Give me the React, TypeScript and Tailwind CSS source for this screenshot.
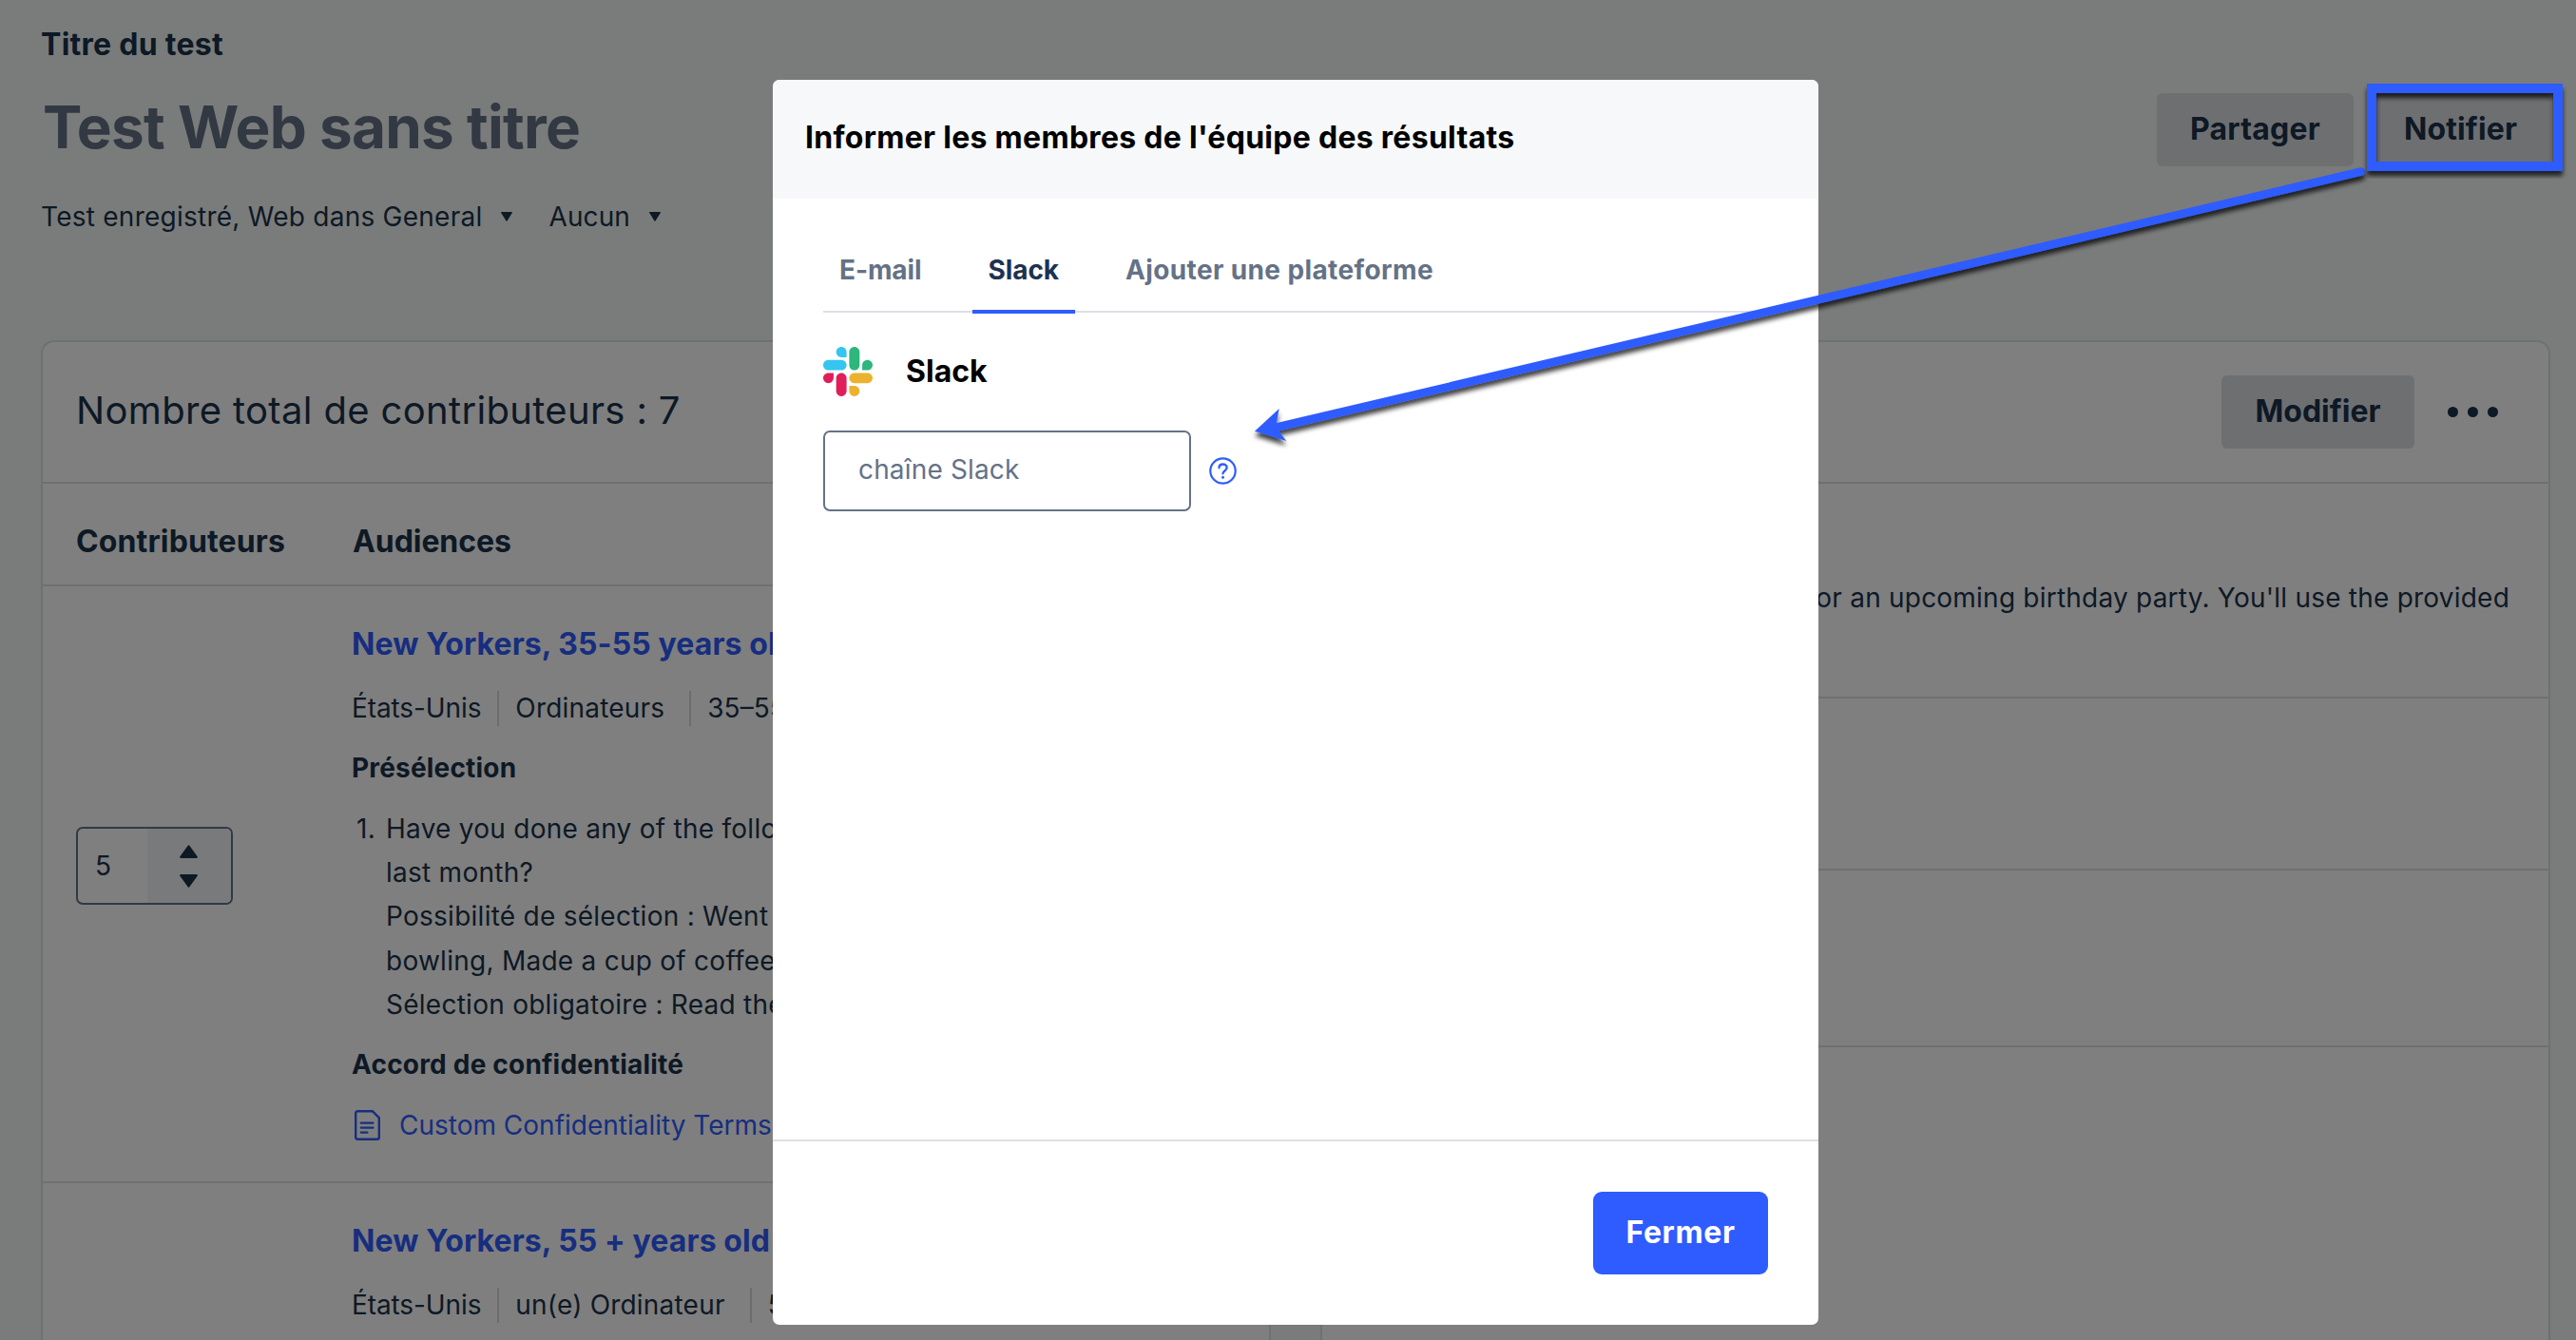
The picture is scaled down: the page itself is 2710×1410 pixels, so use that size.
import React from "react";

const tabs = [
  { label: "E-mail", active: false, tracking: "tracking-[-0.1px]" },
  { label: "Slack", active: true, tracking: "tracking-[-0.1px]" },
  { label: "Ajouter une plateforme", active: false, tracking: "tracking-[0.38px]" },
];

const screener = [
  "Have you done any of the following in the",
  "last month?",
  "Possibilité de sélection : Went to a movie, Went",
  "bowling, Made a cup of coffee at home",
  "Sélection obligatoire : Read the news",
];

function Caret() {
  return (
    <svg width="12" height="10" viewBox="0 0 12 10" fill="currentColor">
      <path d="M0.6 0h10.8q0.9 0 0.4 0.9L6.5 9.4q-0.5 0.7-1 0L0.2 0.9Q-0.3 0 0.6 0z" />
    </svg>
  );
}

function StepArrow({ down = false }: { down?: boolean }) {
  return (
    <svg
      width="19"
      height="14"
      viewBox="0 0 19 14"
      fill="currentColor"
      className={down ? "rotate-180" : ""}
    >
      <path d="M8.7 0.7q0.8-1 1.6 0l8.2 11.2q1 1.9-1 2.1h-16q-2-0.2-1-2.1z" />
    </svg>
  );
}

function DocumentIcon() {
  return (
    <svg width="27" height="32" viewBox="0 0 27 32" fill="none" stroke="currentColor" strokeWidth="2.4">
      <path d="M3.2 1.2h15.6l7 7v20.6a2 2 0 0 1-2 2H3.2a2 2 0 0 1-2-2V3.2a2 2 0 0 1 2-2z" strokeLinejoin="round" />
      <path d="M6.8 13.6h12.6M6.8 18.6h12.6M6.8 23.6h6.6" strokeLinecap="round" />
    </svg>
  );
}

function SlackLogo() {
  return (
    <svg width="52" height="52" viewBox="0 0 122.8 122.8">
      <path
        fill="#e01e5a"
        d="M25.8 77.6c0 7.1-5.8 12.9-12.9 12.9S0 84.7 0 77.6s5.8-12.9 12.9-12.9h12.9v12.9zM32.3 77.6c0-7.1 5.8-12.9 12.9-12.9s12.9 5.8 12.9 12.9v32.3c0 7.1-5.8 12.9-12.9 12.9s-12.9-5.8-12.9-12.9V77.6z"
      />
      <path
        fill="#36c5f0"
        d="M45.2 25.8c-7.1 0-12.9-5.8-12.9-12.9S38.1 0 45.2 0s12.9 5.8 12.9 12.9v12.9H45.2zM45.2 32.3c7.1 0 12.9 5.8 12.9 12.9s-5.8 12.9-12.9 12.9H12.9C5.8 58.1 0 52.3 0 45.2s5.8-12.9 12.9-12.9h32.3z"
      />
      <path
        fill="#2eb67d"
        d="M97 45.2c0-7.1 5.8-12.9 12.9-12.9s12.9 5.8 12.9 12.9-5.8 12.9-12.9 12.9H97V45.2zM90.5 45.2c0 7.1-5.8 12.9-12.9 12.9s-12.9-5.8-12.9-12.9V12.9C64.7 5.8 70.5 0 77.6 0s12.9 5.8 12.9 12.9v32.3z"
      />
      <path
        fill="#ecb22e"
        d="M77.6 97c7.1 0 12.9 5.8 12.9 12.9s-5.8 12.9-12.9 12.9-12.9-5.8-12.9-12.9V97h12.9zM77.6 90.5c-7.1 0-12.9-5.8-12.9-12.9s5.8-12.9 12.9-12.9h32.3c7.1 0 12.9 5.8 12.9 12.9s-5.8 12.9-12.9 12.9H77.6z"
      />
    </svg>
  );
}

function HelpIcon() {
  return (
    <svg width="29" height="29" viewBox="0 0 29 29" fill="none" stroke="#2f5cff" strokeLinecap="round" strokeLinejoin="round">
      <circle cx="14.5" cy="14.5" r="13.2" strokeWidth="2.2" />
      <path d="M10.5 11.3c0-2.3 1.7-3.8 4-3.8s4.2 1.4 4.2 3.6c0 3.2-4 3-4.2 6.2" strokeWidth="2.3" />
      <circle cx="14.5" cy="21.2" r="1.5" fill="#2f5cff" stroke="none" />
    </svg>
  );
}

function AudienceMeta({ items }: { items: string[] }) {
  return (
    <div className="mt-[29px] flex h-[37px] text-[28px] leading-[36px] whitespace-nowrap">
      {items.map((item, index) => (
        <span
          key={item}
          className={index === 0 ? "pr-[17px] tracking-[-0.1px]" : index === 1 ? "border-l-2 border-[#d6d9df] pl-[17px] pr-[26px] tracking-[0.2px]" : "border-l-2 border-[#d6d9df] pl-[17px]"}
        >
          {item}
        </span>
      ))}
    </div>
  );
}

function ContributorsCard() {
  return (
    <section className="w-[1294px] rounded-t-[14px] border-2 border-b-0 border-[#dfe1e2] bg-white">
      <div className="flex h-[149px] items-center border-b-2 border-[#dfe1e2] pb-[4px] pl-[35px]">
        <h2 className="text-[40px] leading-[48px] tracking-[0.34px]">Nombre total de contributeurs : 7</h2>
      </div>

      <div className="flex h-[108px] items-center border-b-2 border-[#dfe1e2] pl-[35px] pt-[15px] text-[32px] font-bold leading-[40px]">
        <span className="w-[291px] tracking-[0.13px]">Contributeurs</span>
        <span className="tracking-[-0.07px]">Audiences</span>
      </div>

      {/* First audience */}
      <div className="flex h-[628px] border-b-2 border-[#dfe1e2] pl-[35px]">
        <div className="w-[290px] pt-[253px]">
          <div className="flex h-[82px] w-[165px] overflow-hidden rounded-[7px] border-2 border-[#647287]">
            <span className="w-[73px] pl-[18px] text-[28px] leading-[78px]">5</span>
            <div className="flex flex-1 flex-col items-center justify-center gap-[17px] bg-[#f3f5f9] pr-[2px]">
              <StepArrow />
              <StepArrow down />
            </div>
          </div>
        </div>

        <div className="pt-[41px]">
          <h3 className="text-[32px] font-bold leading-[40px] tracking-[0.1px] whitespace-nowrap text-[#2f5cff]">
            New Yorkers, 35-55 years old
          </h3>
          <AudienceMeta items={["États-Unis", "Ordinateurs", "35–55 ans"]} />

          <h4 className="mt-[21px] text-[28px] font-bold leading-[46px] tracking-[0.18px]">Présélection</h4>
          <div className="mt-[18px] flex text-[28px] leading-[46.2px] tracking-[0.26px] whitespace-nowrap">
            <span className="w-[36px] pl-[5px]">1.</span>
            <div>
              {screener.map((line) => (
                <p key={line}>{line}</p>
              ))}
            </div>
          </div>

          <h4 className="mt-[17px] text-[28px] font-bold leading-[46px] tracking-[0.2px]">
            Accord de confidentialité
          </h4>
          <a className="mt-[18px] flex items-center gap-[20px] pl-[3px] text-[28px] leading-[46px] text-[#2f5cff]">
            <DocumentIcon />
            Custom Confidentiality Terms
          </a>
        </div>
      </div>

      {/* Second audience */}
      <div className="pl-[325px] pt-[41px]">
        <h3 className="text-[32px] font-bold leading-[40px] tracking-[0.1px] whitespace-nowrap text-[#2f5cff]">
          New Yorkers, 55 + years old
        </h3>
        <AudienceMeta items={["États-Unis", "un(e) Ordinateur", "55+ ans"]} />
      </div>
    </section>
  );
}

function ScenarioCard() {
  return (
    <section className="w-[1294px] rounded-t-[14px] border-2 border-b-0 border-[#dfe1e2] bg-white">
      <div className="flex h-[149px] items-center justify-end border-b-2 border-[#dfe1e2] pr-[53px]">
        <button className="h-[77px] w-[203px] rounded-[6px] bg-[#dddfe3] pb-[2px] text-[32px] font-bold">
          Modifier
        </button>
        <div className="ml-[35px] flex gap-[10px]">
          <i className="size-[11px] rounded-full bg-[#1b324b]" />
          <i className="size-[11px] rounded-full bg-[#1b324b]" />
          <i className="size-[11px] rounded-full bg-[#1b324b]" />
        </div>
      </div>
      <div className="h-[226px] border-b-2 border-[#dfe1e2] pr-[41px] pt-[97px] text-right text-[28px] leading-[46px] tracking-[0.22px]">
        for an upcoming birthday party. You'll use the provided
      </div>
      <div className="h-[181px] border-b-2 border-[#dfe1e2]" />
      <div className="h-[186px] border-b-2 border-[#dfe1e2]" />
    </section>
  );
}

function NotifyModal() {
  return (
    <div className="flex h-[1310px] w-[1100px] flex-col overflow-hidden rounded-[7px] bg-white text-black">
      <header className="flex h-[125px] shrink-0 items-center bg-[#f7f8fa] pb-[4px] pl-[34px]">
        <h2 className="text-[32px] font-bold tracking-[0.28px]">Informer les membres de l'équipe des résultats</h2>
      </header>

      <div className="flex-1 px-[53px]">
        <nav className="flex h-[120px] items-end gap-[36px] border-b-2 border-[#dcdfe5]">
          {tabs.map((tab) => (
            <button
              key={tab.label}
              className={`-mb-[3px] border-b-4 px-[17px] pb-[22px] text-[28px] font-bold leading-[40px] ${tab.tracking} ${
                tab.active ? "border-[#2f5cff] text-[#1c3350]" : "border-transparent text-[#647287]"
              }`}
            >
              {tab.label}
            </button>
          ))}
        </nav>

        <div className="mt-[36px] flex items-center gap-[35px]">
          <SlackLogo />
          <h3 className="text-[32px] font-bold">Slack</h3>
        </div>

        <div className="mt-[36px] flex items-center gap-[19px]">
          <input
            className="h-[85px] w-[387px] rounded-[7px] border-2 border-[#647287] pb-[3px] pl-[35px] text-[28px] tracking-[0.16px] placeholder:text-[#647287]"
            placeholder="chaîne Slack"
          />
          <HelpIcon />
        </div>
      </div>

      <footer className="flex h-[195px] items-center justify-end border-t-2 border-[#dcdfe5] pr-[53px]">
        <button className="h-[87px] w-[184px] rounded-[9px] bg-[#2f5cff] pb-[2px] text-[32px] font-bold tracking-[0.6px] text-white">
          Fermer
        </button>
      </footer>
    </div>
  );
}

// Frame around the notify button with an arrow down to the channel field
function Annotation() {
  return (
    <svg className="absolute inset-0" width="2710" height="1410" viewBox="0 0 2710 1410" fill="none">
      <defs>
        <filter id="drop" x="-5%" y="-10%" width="110%" height="125%">
          <feDropShadow dx="0" dy="5" stdDeviation="2.5" floodColor="#000" floodOpacity="0.75" />
        </filter>
      </defs>
      <g filter="url(#drop)">
        <path d="M1340 450.3L2484 180.5" stroke="#2f5cff" strokeWidth="8.6" strokeLinecap="round" />
        <path d="M1320 453.7L1345.7 430L1342 449.5L1353.3 464z" fill="#2f5cff" />
      </g>
      <rect x="2495" y="93" width="196" height="82" stroke="#2f5cff" strokeWidth="10" filter="url(#drop)" />
    </svg>
  );
}

export default function App() {
  return (
    <div className="relative h-[1410px] w-[2710px] overflow-hidden bg-[#f5f8f6] font-['Inter',sans-serif] text-[#1b324b]">
      <div className="flex h-[358px] justify-between pl-[43px] pr-[27px]">
        <div className="pt-[27px]">
          <p className="text-[32px] font-bold leading-[40px] tracking-[0.27px]">Titre du test</p>
          <h1 className="mt-[31px] pl-[2px] text-[62px] font-bold leading-[72px] tracking-[-0.73px] text-[#647287]">
            Test Web sans titre
          </h1>
          <div className="mt-[38px] flex items-center text-[28px] leading-[40px]">
            <span className="tracking-[0.25px]">Test enregistré, Web dans General</span>
            <span className="ml-[20px]"><Caret /></span>
            <span className="ml-[38px] tracking-[0.1px]">Aucun</span>
            <span className="ml-[20px]"><Caret /></span>
          </div>
        </div>
        <div className="flex gap-[18px] pt-[98px] text-[32px] font-bold">
          <button className="h-[77px] w-[207px] rounded-[6px] bg-[#dddfe3] pb-[2px] tracking-[0.24px]">Partager</button>
          <button className="h-[77px] w-[189px] rounded-[6px] bg-[#dddfe3] pb-[2px] tracking-[0.12px]">Notifier</button>
        </div>
      </div>

      <div className="flex h-[1052px] gap-[52px] pl-[43px]">
        <ContributorsCard />
        <ScenarioCard />
      </div>

      <div className="absolute inset-0 bg-black/50 pl-[813px] pt-[84px]">
        <NotifyModal />
      </div>
      <Annotation />
    </div>
  );
}
